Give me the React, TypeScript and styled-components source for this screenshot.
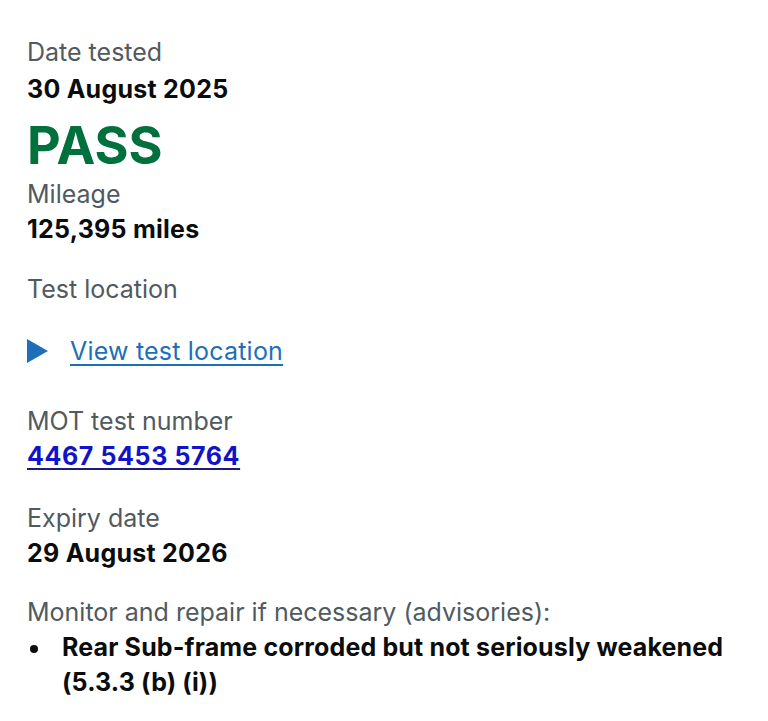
import React from "react";
import styled, { createGlobalStyle } from "styled-components";

const GlobalStyle = createGlobalStyle`
  html, body {
    margin: 0;
    padding: 0;
    background: #ffffff;
  }
  body {
    font-family: Inter, "Noto Sans", "Liberation Sans", Arial, sans-serif;
    color: #0b0c0c;
    -webkit-font-smoothing: antialiased;
  }
`;

const Page = styled.main`
  display: flex;
  flex-direction: column;
  padding: 35px 27px 20px 27px;
  width: 768px;
  box-sizing: border-box;
`;

const Group = styled.section<{ $gap?: number }>`
  display: flex;
  flex-direction: column;
  margin-top: ${(p) => p.$gap ?? 0}px;
`;

const Label = styled.div`
  font-size: 25px;
  line-height: 35px;
  font-weight: 400;
  color: #505a5f;
`;

const Value = styled.div<{ $offset?: number }>`
  font-size: 25px;
  line-height: 35px;
  font-weight: 700;
  letter-spacing: 0.25px;
  color: #0b0c0c;
  margin-top: ${(p) => p.$offset ?? 0}px;
`;

const Result = styled.div`
  font-size: 52px;
  line-height: 55px;
  font-weight: 700;
  color: #00703c;
  margin-top: 11px;
  margin-bottom: 4px;
`;

const Disclosure = styled.div`
  display: flex;
  align-items: center;
  gap: 22px;
  margin-top: 27px;
  height: 35px;
`;

const Triangle = styled.span`
  display: block;
  width: 0;
  height: 0;
  border-top: 12px solid transparent;
  border-bottom: 12px solid transparent;
  border-left: 21px solid #1d70b8;
  margin-bottom: 2px;
`;

const SummaryLink = styled.a`
  font-size: 25px;
  line-height: 35px;
  color: #1d70b8;
  letter-spacing: 0.2px;
  text-decoration: underline;
  text-decoration-thickness: 1.5px;
  text-underline-offset: 4px;
  cursor: pointer;
`;

const NumberLink = styled.a`
  font-size: 25px;
  line-height: 35px;
  font-weight: 700;
  letter-spacing: 0.6px;
  color: #1212c8;
  text-decoration: underline;
  text-decoration-color: #1c1c80;
  text-decoration-thickness: 2px;
  text-underline-offset: 3px;
  align-self: flex-start;
`;

const BulletList = styled.ul`
  margin: 0;
  padding: 0 0 0 35px;
  list-style: none;
`;

const BulletItem = styled.li`
  position: relative;
  font-size: 25px;
  line-height: 35px;
  font-weight: 700;
  letter-spacing: 0.15px;
  color: #0b0c0c;
  &::before {
    content: "";
    position: absolute;
    left: -32px;
    top: 15px;
    width: 8px;
    height: 8px;
    border-radius: 50%;
    background: #0b0c0c;
  }
`;

export default function App() {
  return (
    <>
      <GlobalStyle />
      <Page>
        <Group>
          <Label>Date tested</Label>
          <Value $offset={2}>30 August 2025</Value>
        </Group>
        <Result>PASS</Result>
        <Group>
          <Label>Mileage</Label>
          <Value>125,395 miles</Value>
        </Group>
        <Group $gap={25}>
          <Label>Test location</Label>
        </Group>
        <Disclosure>
          <Triangle />
          <SummaryLink>View test location</SummaryLink>
        </Disclosure>
        <Group $gap={35}>
          <Label>MOT test number</Label>
          <NumberLink href="#">4467 5453 5764</NumberLink>
        </Group>
        <Group $gap={27}>
          <Label>Expiry date</Label>
          <Value>29 August 2026</Value>
        </Group>
        <Group $gap={24}>
          <Label>Monitor and repair if necessary (advisories):</Label>
          <BulletList>
            <BulletItem>
              Rear Sub-frame corroded but not seriously weakened (5.3.3 (b) (i))
            </BulletItem>
          </BulletList>
        </Group>
      </Page>
    </>
  );
}
